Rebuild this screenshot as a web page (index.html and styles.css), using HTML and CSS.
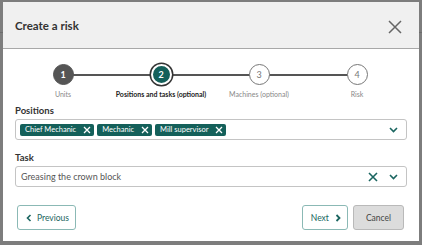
FILE: index.html
```html
<!DOCTYPE html>
<html>
<head>
<meta charset="utf-8">
<link rel="stylesheet" href="styles.css">
</head>
<body>
<div class="backdrop-line"></div>
<div class="dialog">
  <div class="header">
    <div class="title">Create a risk</div>
    <svg class="close" width="14" height="14" viewBox="0 0 14 14"><path d="M1 1 L13 13 M13 1 L1 13" stroke="#666" stroke-width="1.5" fill="none"/></svg>
  </div>
  <div class="body">
    <div class="stepper">
      <div class="track"></div>
      <div class="step done"><div class="dot">1</div><div class="lbl">Units</div></div>
      <div class="step active"><div class="dot">2</div><div class="lbl">Positions and tasks (optional)</div></div>
      <div class="step"><div class="dot">3</div><div class="lbl">Machines (optional)</div></div>
      <div class="step"><div class="dot">4</div><div class="lbl">Risk</div></div>
    </div>
    <div class="field">
      <div class="flabel">Positions</div>
      <div class="input">
        <div class="chips">
          <span class="chip">Chief Mechanic <svg width="8" height="8" viewBox="0 0 8 8"><path d="M1 1L7 7M7 1L1 7" stroke="#fff" stroke-width="1.3"/></svg></span>
          <span class="chip">Mechanic <svg width="8" height="8" viewBox="0 0 8 8"><path d="M1 1L7 7M7 1L1 7" stroke="#fff" stroke-width="1.3"/></svg></span>
          <span class="chip">Mill supervisor <svg width="8" height="8" viewBox="0 0 8 8"><path d="M1 1L7 7M7 1L1 7" stroke="#fff" stroke-width="1.3"/></svg></span>
        </div>
        <svg class="chev" width="9" height="6" viewBox="0 0 9 6"><path d="M1 1L4.5 4.5L8 1" stroke="#1a6560" stroke-width="1.6" fill="none"/></svg>
      </div>
    </div>
    <div class="field">
      <div class="flabel">Task</div>
      <div class="input">
        <div class="value">Greasing the crown block</div>
        <svg class="clear" width="10" height="10" viewBox="0 0 10 10"><path d="M1 1L9 9M9 1L1 9" stroke="#1a6560" stroke-width="1.6"/></svg>
        <svg class="chev" width="9" height="6" viewBox="0 0 9 6"><path d="M1 1L4.5 4.5L8 1" stroke="#1a6560" stroke-width="1.6" fill="none"/></svg>
      </div>
    </div>
    <div class="actions">
      <button class="btn outline prev"><svg width="6" height="8" viewBox="0 0 6 8"><path d="M4.5 1L1.5 4L4.5 7" stroke="#1a6560" stroke-width="1.6" fill="none"/></svg>Previous</button>
      <div class="spacer"></div>
      <button class="btn outline next">Next<svg width="6" height="8" viewBox="0 0 6 8"><path d="M1.5 1L4.5 4L1.5 7" stroke="#1a6560" stroke-width="1.8" fill="none"/></svg></button>
      <button class="btn cancel">Cancel</button>
    </div>
  </div>
</div>
</body>
</html>
```
FILE: styles.css
```css
html, body { margin: 0; padding: 0; }
body {
  width: 422px; height: 245px; overflow: hidden;
  background: #7d7d7d;
  font-family: Lato, "Open Sans", sans-serif;
  position: relative;
}
.backdrop-line { position: absolute; left: 0; right: 0; top: 32px; height: 1px; background: #6c6c6c; }
.dialog {
  position: relative;
  margin: 2px 3px 0 3px;
  width: 416px; height: 239px;
  background: #fff;
  display: flex; flex-direction: column;
}
.header {
  height: 46px; background: #f0f0f0; border-bottom: 1px solid #a8a8a8;
  display: flex; align-items: center; justify-content: space-between;
  padding: 0 17px 0 12px;
}
.title { font-size: 11.5px; font-weight: 700; color: #333; margin-top: 1px; }
.close { margin-top: 3px; }
.body { padding: 0 9px 0 12px; display: flex; flex-direction: column; }
.stepper { position: relative; display: flex; padding: 15px 0 0 0; height: 38px; margin-left: -1px; }
.track { position: absolute; top: 25px; left: 49px; right: 49px; height: 2px; background: #555; }
.step { position: relative; width: 98px; display: flex; flex-direction: column; align-items: center; }
.dot {
  position: relative;
  width: 21px; height: 21px; border-radius: 50%; box-sizing: border-box;
  border: 1.5px solid #777; background: #fff; color: #777;
  font-size: 9px; display: flex; align-items: center; justify-content: center;
}
.step.done .dot { background: #555; border-color: #555; color: #fff; font-weight: 700; }
.step.active .dot { background: #14605a; border: 2px solid #fff; box-shadow: 0 0 0 1.5px #333; color: #fff; font-weight: 700; }
.lbl { margin-top: 5px; font-size: 7px; color: #888; white-space: nowrap; }
.step.active .lbl { color: #222; font-weight: 700; }
.field { display: flex; flex-direction: column; }
.flabel { font-size: 9.5px; font-weight: 700; color: #333; margin: 3px 0 3px 0; }
.field + .field .flabel { margin-top: 12px; }
.input {
  height: 19px; border: 1px solid #c4c4c4; border-radius: 3px;
  display: flex; align-items: center; padding: 0 8px 0 4px; width: 378px;
}
.chips { display: flex; gap: 3px; flex: 1; }
.chip {
  background: #14605a; color: #fff; font-size: 7.5px; border-radius: 2px;
  height: 12px; display: flex; align-items: center; gap: 7px; padding: 0 3px 0 5px;
}
.value { flex: 1; font-size: 9px; color: #555; padding-left: 1px; }
.clear { margin-right: 11px; }
.actions { display: flex; align-items: center; margin-top: 18px; padding: 0 6px 0 2px; }
.spacer { flex: 1; }
.btn {
  font-family: inherit; font-size: 8.5px; height: 25px; border-radius: 3px;
  display: flex; align-items: center; gap: 6px; padding: 0 8px;
}
.btn svg { flex: none; }
.outline { background: #fff; border: 1px solid #8bb9b5; color: #1a6560; }
.prev { padding: 0 6px 0 8px; gap: 5px; }
.next { margin-right: 5px; padding: 0 6px 0 8px; }
.cancel { background: #dcdcdc; border: 1px solid #b9b9b9; color: #444; padding: 0 12px; }
```
